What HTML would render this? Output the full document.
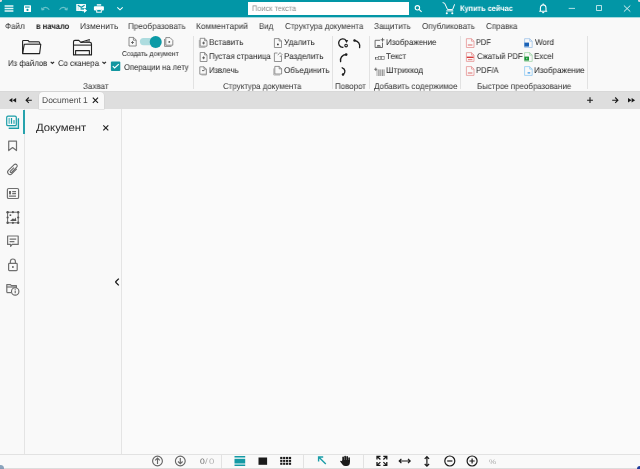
<!DOCTYPE html>
<html><head><meta charset="utf-8">
<style>
*{margin:0;padding:0;box-sizing:border-box}
html,body{width:640px;height:469px;overflow:hidden;background:#fafafa}
body{position:relative;font-family:"Liberation Sans",sans-serif;color:#444}
.a{position:absolute}
.t{position:absolute;white-space:nowrap;line-height:normal;transform-origin:0 0;will-change:transform;text-rendering:geometricPrecision}
svg{position:absolute;overflow:visible}
#title{left:0;top:0;width:640px;height:17px;background:#0296a6;box-shadow:0 1px 0 #a6d9de}
#menu{left:0;top:18px;width:640px;height:73px;background:#f9f9f9}
#tabbar{left:0;top:91px;width:640px;height:18px;background:#dedede;border-top:1px solid #d8d8d8}
#side{left:0;top:109px;width:25px;height:345px;background:#f9f9f9;border-right:1px solid #e4e4e4}
#panel{left:25px;top:109px;width:97px;height:345px;background:#f9f9f9;border-right:1px solid #e4e4e4}
#bottom{left:0;top:454px;width:640px;height:15px;background:#f9f9f9;border-top:1px solid #e2e2e2;border-bottom:1px solid #dcdcdc}
.sep{position:absolute;width:1px;background:#e2e2e2}

</style></head><body>
<div id="title" class="a"></div>
<div id="menu" class="a"></div>
<div id="tabbar" class="a"></div>
<div id="side" class="a"></div>
<div id="panel" class="a"></div>
<div id="bottom" class="a"></div>
<div class="a" style="left:248px;top:2px;width:161px;height:13px;background:#fff"></div>
<div class="sep" style="left:193px;top:36px;height:53px"></div>
<div class="sep" style="left:332px;top:36px;height:53px"></div>
<div class="sep" style="left:369px;top:36px;height:53px"></div>
<div class="sep" style="left:460px;top:36px;height:53px"></div>
<div class="sep" style="left:587px;top:36px;height:53px"></div>
<div class="a" style="left:38.5px;top:91.6px;width:65.7px;height:17.4px;background:#f9f9f9;border-radius:4px 4px 0 0;box-shadow:0 0 0 0.5px #d0d0d0"></div>
<div class="a" style="left:23px;top:110px;width:2px;height:24px;background:#27a3ad"></div>
<div class="sep" style="left:220.5px;top:455px;height:13px"></div>
<div class="sep" style="left:303px;top:455px;height:13px"></div>
<div class="sep" style="left:362.5px;top:455px;height:13px"></div>
<div class="a" style="left:-3px;top:465px;width:7px;height:7px;border-radius:50%;background:#6f8fae;opacity:.8"></div>
<div class="a" style="left:637px;top:466px;width:6px;height:6px;border-radius:50%;background:#1f3b9a"></div>
<div class="a" style="left:-1.5px;top:-1.5px;width:3.5px;height:3.5px;border-radius:50%;background:#e4dde0"></div>
<div class="a" style="left:638px;top:-1.5px;width:3.5px;height:3.5px;border-radius:50%;background:#ddd6e2"></div>
<svg class="a" style="left:0;top:0" width="640" height="469" viewBox="0 0 640 469">
<g fill="none" stroke="#e6f6f7" stroke-width="1.3">
 <path d="M4.6 6H13.4M4.6 8.5H13.4M4.6 11H13.4"/>
</g>
<g>
 <rect x="24" y="5.2" width="7" height="6.8" rx="0.6" fill="#fff"/>
 <rect x="25" y="6.5" width="4.6" height="1.1" fill="#0296a6"/>
 <circle cx="27.5" cy="9.9" r="1.1" fill="#0296a6"/>
</g>
<g fill="none" stroke="#6cc4cb" stroke-width="1.1">
 <path d="M42 9.8 C43.5 6.5 47 6.5 49.3 9.8"/>
 <path d="M41.6 7.6 L42.1 9.9 L44.3 9.4"/>
 <path d="M59.5 9.8 C61.5 6.5 65 6.5 67 9.8"/>
 <path d="M67.3 7.6 L66.9 9.9 L64.7 9.4"/>
</g>
<rect x="76.2" y="3.9" width="9.8" height="7" rx="0.5" fill="#f4fbfb"/>
<path d="M77.8 5.2 L81.3 7.3 L84.6 5.2" fill="none" stroke="#0296a6" stroke-width="1.1"/>
<path d="M78.3 6.4 V10" fill="none" stroke="#9fd6da" stroke-width="0.6"/>
<path d="M80.6 8.9 H86.5" fill="none" stroke="#0296a6" stroke-width="1.4"/>
<path d="M82.2 10.6 H85.2 M84.6 9.4 L86.1 10.6 L84.6 11.8 Z" fill="#fff" stroke="#fff" stroke-width="1.2"/>
<g fill="#fff">
 <rect x="96.8" y="4.2" width="4.4" height="1.4"/>
 <rect x="93.9" y="6.2" width="10" height="4.2" rx="0.9"/>
 <rect x="96.2" y="9" width="5.6" height="3.6" fill="#0296a6"/>
</g>
<rect x="96.7" y="9.4" width="4.6" height="2.8" fill="none" stroke="#fff" stroke-width="1"/>
<path d="M117.3 7.3 L120 9.8 L122.7 7.3" fill="none" stroke="#fff" stroke-width="1.1"/>
<g fill="none" stroke="#fff" stroke-width="1.1">
 <circle cx="417.4" cy="7.8" r="2.2"/>
 <path d="M419 9.4 L421.6 11.9"/>
</g>
<g fill="none" stroke="#fff" stroke-width="1.0">
 <path d="M442.6 2.6 L444.6 3.2 L447.6 9.6 L452.6 9.6 L454.6 4.3"/>
 <path d="M446.3 10.9 H453.3"/>
</g>
<circle cx="446.8" cy="13.2" r="1.05" fill="#fff"/>
<circle cx="452.3" cy="13.2" r="1.05" fill="#fff"/>
<g fill="none" stroke="#fff" stroke-width="1.1">
 <path d="M539.2 11.3 H547.2 M540.4 11.3 V8.2 C540.4 5.8 541.8 4.9 543.2 4.9 C544.6 4.9 546 5.8 546 8.2 V11.3"/>
 <path d="M542.2 12.6 H544.2"/>
 <path d="M543.2 3.6 V4.8"/>
</g>
<g fill="none" stroke="#d8f1f3" stroke-width="0.85">
 <path d="M568.7 8.4 H575"/>
 <rect x="596.6" y="5.6" width="4.9" height="4.9"/>
 <path d="M623.9 5.5 L630.3 11.6 M630.3 5.5 L623.9 11.6" stroke-width="1"/>
</g>

<g fill="none" stroke="#222" stroke-width="1.1" stroke-linejoin="round">
 <path d="M24.3 44.2 H40.8 L39.6 53.6 H22.6 Z" fill="#fafafa"/>
 <path d="M22.6 53.6 V41.2 Q22.6 40.5 23.3 40.5 H28 L29.2 41.7 H38.4 Q39.4 41.7 39.6 42.7 L39.9 44"/>
</g>
<path d="M29.4 42.4 H38.6 L39.2 43.6 H25 Z" fill="#8a8a8a"/>
<g fill="none" stroke="#222" stroke-width="1.1" stroke-linejoin="round">
 <path d="M73.5 54.9 V41.8 Q73.5 40.4 74.9 40.4 H78.8 L80.8 42.4 H89.8 Q91.5 42.4 91.5 44.1 V54.9 Z"/>
 <path d="M73.5 45.1 H91.5"/>
 <path d="M75.6 54.9 V50.6 H89.4 V54.9"/>
 <path d="M80.9 42.3 L89.8 39.4"/>
</g>
<path d="M81.6 42.5 L89.8 40 L90.2 42.2 Z" fill="#777"/>
<g fill="none" stroke="#6a6a6a" stroke-width="0.75" stroke-linejoin="round">
 <path d="M129 37.4 H133.6 L136.2 40 V46 H129 Z"/>
 <path d="M133.4 37.6 V40.2 H136"/>
 <path d="M132.5 41 V44 M131 42.5 H134" stroke="#555" stroke-width="0.8"/>
</g>
<rect x="139.9" y="38" width="17" height="7.2" rx="3.6" fill="#addcdf"/>
<circle cx="155.7" cy="42.1" r="6.2" fill="#c9c9c9" opacity="0.35"/>
<circle cx="155.7" cy="41.9" r="6" fill="#0b9aa6"/>
<g fill="none" stroke="#6a6a6a" stroke-width="0.75" stroke-linejoin="round">
 <path d="M165.8 37.6 H170 L172.8 40.4 V45.2 H165.8 Z"/>
 <path d="M164.6 39 V46.4 H171.5"/>
</g>
<circle cx="169.3" cy="41.9" r="0.9" fill="#555"/>
<path d="M50.7 61.8 L52.4 63.5 L54.1 61.8" fill="none" stroke="#2a2a2a" stroke-width="1.1"/>
<path d="M102.4 61.8 L104.2 63.5 L106 61.8" fill="none" stroke="#2a2a2a" stroke-width="1.1"/>
<rect x="110.9" y="61.4" width="9.4" height="9.6" rx="1" fill="#1396a0"/>
<path d="M112.8 66.1 L114.6 67.9 L118.8 64.1" fill="none" stroke="#fff" stroke-width="1.2"/>
<path d="M199.3 40 V47.4 H205.5" fill="none" stroke="#9a9a9a" stroke-width="0.75"/><path d="M200.2 38.3 H204.6 L207.0 40.699999999999996 V46.199999999999996 H200.2 Z M204.6 38.3 V40.699999999999996 H207.0" fill="none" stroke="#707070" stroke-width="0.75" stroke-linejoin="round"/><path d="M203.6 41.6 V44.4 M202.2 43 H205" stroke="#444" stroke-width="0.8"/><path d="M200.2 52.5 H204.6 L207.0 54.9 V61.5 H200.2 Z M204.6 52.5 V54.9 H207.0" fill="none" stroke="#707070" stroke-width="0.75" stroke-linejoin="round"/><path d="M203.6 56.4 V59.2 M202.2 57.8 H205" stroke="#444" stroke-width="0.8"/><path d="M199.8 66.8 H204.0 L206.4 69.2 V74.2 H199.8 Z M204.0 66.8 V69.2 H206.4" fill="none" stroke="#707070" stroke-width="0.75" stroke-linejoin="round"/><path d="M206.4 69 V75 H201.4" fill="none" stroke="#9a9a9a" stroke-width="0.75"/><path d="M202 70.6 H204.4" stroke="#444" stroke-width="0.8"/><path d="M274.4 38.6 H279.1 L281.5 41.0 V47.5 H274.4 Z M279.1 38.6 V41.0 H281.5" fill="none" stroke="#707070" stroke-width="0.75" stroke-linejoin="round"/><circle cx="277.9" cy="44.4" r="0.9" fill="#333"/><path d="M274.4 55 V61.5 H281.5 V56" fill="none" stroke="#707070" stroke-width="0.75"/><path d="M274.4 55 V53 H277.5" fill="none" stroke="#707070" stroke-width="0.75"/><path d="M277.8 55.2 L280 52.6 L282 54.6 L279.8 57" fill="none" stroke="#707070" stroke-width="0.75"/><path d="M274.8 66.4 H279.20000000000005 L281.6 68.80000000000001 V74.0 H274.8 Z M279.20000000000005 66.4 V68.80000000000001 H281.6" fill="none" stroke="#707070" stroke-width="0.75" stroke-linejoin="round"/><path d="M273.8 68.4 V75 H280" fill="none" stroke="#9a9a9a" stroke-width="0.75"/>
<g fill="none" stroke="#1e1e1e" stroke-width="1.35" stroke-linecap="round">
 <path d="M346.2 40.6 A4.2 4.2 0 1 0 342.9 47.3"/>
 <path d="M354.8 40.5 A5.8 5.8 0 0 1 359.6 47.6"/>
 <path d="M340.6 61.6 A5.8 5.8 0 0 1 346 54.5"/>
 <path d="M342.2 67.8 A3.7 3.7 0 0 1 343 74.6"/>
</g>
<g fill="#1e1e1e">
 <path d="M344.8 40.2 L348.2 40 L346.7 43 Z"/>
 <circle cx="354.5" cy="40.4" r="1.25"/>
 <circle cx="346.2" cy="54.6" r="1.3"/>
 <circle cx="343" cy="74.6" r="1.25"/>
</g>
<circle cx="346.1" cy="45.6" r="1.3" fill="#f9f9f9" stroke="#1e1e1e" stroke-width="1.1"/>

<g fill="none" stroke="#555" stroke-width="0.85">
 <path d="M380 40.3 H375.1 V47.5 H382.5 V42.6"/>
 <path d="M382.5 37.9 V41.7 M380.6 39.8 H384.4"/>
</g>
<path d="M376.6 46.4 L378 44.8 L379 45.8 L379.8 45 L381 46.4 Z" fill="#333"/>
<g fill="#666">
 <rect x="375" y="57" width="1" height="2.6"/><rect x="376.3" y="57" width="1.6" height="0.8"/><rect x="376.3" y="58.8" width="1.6" height="0.8"/>
 <rect x="378.4" y="56.4" width="2.4" height="3.2" fill="none" stroke="#777" stroke-width="0.7"/>
 <rect x="381.4" y="56.6" width="2.8" height="3" fill="none" stroke="#777" stroke-width="0.7"/>
</g>
<g fill="#999">
 <rect x="376.6" y="70" width="0.8" height="6"/><rect x="378.2" y="69.4" width="1.4" height="6.6"/>
 <rect x="380.2" y="69.4" width="0.8" height="6.6"/><rect x="381.6" y="69.4" width="1.6" height="6.6"/>
 <rect x="383.6" y="69.4" width="1" height="6.6"/>
</g>
<path d="M375.8 67.6 V71 M374.2 69.3 H377.4" stroke="#555" stroke-width="0.8"/>
<path d="M466.4 38.7 H471.5 L474.0 41.2 V47.5 H466.4 Z M471.5 38.7 V41.2 H474.0" fill="none" stroke="#e58e8e" stroke-width="0.75" stroke-linejoin="round"/><rect x="467.8" y="44.2" width="4.6" height="1.6" fill="#e8a0a0"/><path d="M466.4 52.6 H471.5 L474.0 55.1 V61.400000000000006 H466.4 Z M471.5 52.6 V55.1 H474.0" fill="none" stroke="#e58e8e" stroke-width="0.75" stroke-linejoin="round"/><rect x="466.8" y="56.6" width="6.8" height="1.4" fill="#d93a3a"/><path d="M468 59.6 H472.4" stroke="#e59090" stroke-width="1.2"/><path d="M466.4 66.6 H471.5 L474.0 69.1 V75.39999999999999 H466.4 Z M471.5 66.6 V69.1 H474.0" fill="none" stroke="#e58e8e" stroke-width="0.75" stroke-linejoin="round"/><rect x="467.8" y="72.2" width="4.6" height="1.6" fill="#e8a0a0"/><path d="M524.6 38.7 H529.7 L532.2 41.2 V47.5 H524.6 Z M529.7 38.7 V41.2 H532.2" fill="none" stroke="#9ec3e8" stroke-width="0.8" stroke-linejoin="round"/><rect x="524.4" y="42.6" width="4.6" height="4" fill="#1c63b7"/><path d="M524.6 52.6 H529.7 L532.2 55.1 V61.400000000000006 H524.6 Z M529.7 52.6 V55.1 H532.2" fill="none" stroke="#9fd4a8" stroke-width="0.8" stroke-linejoin="round"/><rect x="524.4" y="56.6" width="4.6" height="4" fill="#1a9338"/><rect x="526" y="57.8" width="1.4" height="1.4" fill="#8fd19e"/><path d="M524.6 66.6 H529.7 L532.2 69.1 V75.39999999999999 H524.6 Z M529.7 66.6 V69.1 H532.2" fill="none" stroke="#8ec9f2" stroke-width="0.8" stroke-linejoin="round"/><path d="M527.6 72.9 H530.2" stroke="#1e88e5" stroke-width="1.1"/>
<g fill="#1a1a1a">
 <path d="M9 100.2 L12.4 97.9 V102.5 Z"/>
 <path d="M12.6 100.2 L16.1 97.9 V102.5 Z"/>
</g>
<g fill="none" stroke="#1a1a1a" stroke-width="1.1">
 <path d="M26.2 100.2 H31.8 M28.8 97.5 L26.1 100.2 L28.8 102.9"/>
 <path d="M92.8 97.6 L98 102.8 M98 97.6 L92.8 102.8"/>
 <path d="M590 97.3 V103.1 M587.1 100.2 H592.9"/>
 <path d="M612.2 100.2 H617.8 M615.2 97.5 L617.9 100.2 L615.2 102.9"/>
</g>
<g fill="#1a1a1a">
 <path d="M628 97.9 L631.5 100.2 L628 102.5 Z"/>
 <path d="M631.6 97.9 L635.1 100.2 L631.6 102.5 Z"/>
</g>

<path d="M8.8 126.4 H16.9 V118.6 H18.6 V128.4 H8.8 Z" fill="#bfe3e6"/>
<g fill="none" stroke="#1a9da8" stroke-width="1.2">
 <rect x="6.7" y="116.1" width="9.6" height="9.6" rx="1.3"/>
 <path d="M18.5 118.3 V128.3 H8.7"/>
</g>
<rect x="8.4" y="118" width="1.6" height="5.8" fill="#7cc7cd"/>
<rect x="10.9" y="118" width="1.2" height="5.8" fill="#1a9da8"/>
<rect x="13" y="120.1" width="2" height="3.7" fill="#7cc7cd"/>
<g fill="none" stroke="#707070" stroke-width="1.2" stroke-linejoin="round">
 <path d="M8.7 141.2 H16.5 V150.6 L12.6 147.6 L8.7 150.6 Z"/>
 <rect x="7.4" y="188.5" width="11.2" height="10" rx="1.3"/>
 <path d="M12.2 191.6 H16 M12.2 193.6 H16 M8.9 196.2 H16"/>
 <path d="M7.6 236 H18.2 V244.4 H12.2 L10.6 246.4 V244.4 H7.6 Z"/>
 <path d="M9.6 239.2 H16.2 M9.6 241.6 H14.4"/>
 <rect x="8.6" y="263.4" width="8.6" height="7.2" rx="0.8"/>
 <path d="M10.4 263.4 V261.6 Q10.4 259 12.9 259 Q15.4 259 15.4 261.6 V263.4"/>
 <path d="M6.8 292.6 V284.6 H10.4 L11.4 285.6 H16.4 V288"/>
 <path d="M6.8 287 H16.2"/>
 <path d="M6.8 292.6 H11"/>
</g>
<rect x="9" y="191" width="2" height="3.4" fill="#666"/>
<path transform="translate(12.6 169.6) rotate(45) translate(0 -6.8)" d="M2.4 3.4 V10.4 A2.4 2.4 0 0 1 -2.4 10.4 V2.2 A1.8 1.8 0 0 1 1.2 2.2 V9.4 A0.85 0.85 0 0 1 -0.5 9.4 V4.4" fill="none" stroke="#666" stroke-width="1.05"/>
<circle cx="12.9" cy="267" r="0.9" fill="#555"/>
<rect x="7.6" y="212.2" width="10.6" height="10.6" fill="none" stroke="#666" stroke-width="1"/>
<g fill="#555">
 <circle cx="7.6" cy="212.2" r="1.2"/><circle cx="12.9" cy="212.2" r="1.1"/><circle cx="18.2" cy="212.2" r="1.2"/>
 <circle cx="7.6" cy="217.5" r="1.1"/><circle cx="18.2" cy="217.5" r="1.1"/>
 <circle cx="7.6" cy="222.8" r="1.2"/><circle cx="12.9" cy="222.8" r="1.1"/><circle cx="18.2" cy="222.8" r="1.2"/>
 <rect x="9.6" y="214.4" width="1.6" height="1.6"/>
 <path d="M10 221 L13 218.2 L14.2 219.4 L15.6 217.6 L16.4 221 Z"/>
</g>
<circle cx="15.2" cy="291.4" r="3.7" fill="#f9f9f9" stroke="#666" stroke-width="1.1"/>
<path d="M15.2 290.6 V293.2" stroke="#555" stroke-width="1"/>
<circle cx="15.2" cy="289.2" r="0.55" fill="#555"/>
<path d="M115.4 282 L118.8 278.6 M115.4 282 L118.8 285.4" stroke="#1a1a1a" stroke-width="1.3" fill="none"/>
<path d="M103.3 125.4 L108.3 130.4 M108.3 125.4 L103.3 130.4" stroke="#222" stroke-width="1.15" fill="none"/>

<g fill="none" stroke="#666" stroke-width="1.15">
 <circle cx="157.5" cy="461" r="4.9"/>
 <circle cx="180.3" cy="461" r="4.9"/>
 <path d="M157.5 464 V458.2 M155.2 460.4 L157.5 458.1 L159.8 460.4"/>
 <path d="M180.3 458 V463.6 M178 461.5 L180.3 463.8 L182.6 461.5"/>
</g>
<g fill="#139aa5">
 <rect x="234.5" y="456" width="10.7" height="1.5"/>
 <rect x="234.5" y="458.8" width="10.7" height="4.7"/>
 <rect x="234.5" y="464.5" width="10.7" height="1.5"/>
</g>
<rect x="258.5" y="457.5" width="8.6" height="7.3" fill="#1a1a1a"/>
<g fill="#1a1a1a">
 <rect x="280.2" y="456.9" width="2.2" height="2.1"/><rect x="283.1" y="456.9" width="2.2" height="2.1"/><rect x="286" y="456.9" width="2.2" height="2.1"/><rect x="288.9" y="456.9" width="2.2" height="2.1"/>
 <rect x="280.2" y="459.8" width="2.2" height="2.1"/><rect x="283.1" y="459.8" width="2.2" height="2.1"/><rect x="286" y="459.8" width="2.2" height="2.1"/><rect x="288.9" y="459.8" width="2.2" height="2.1"/>
 <rect x="280.2" y="462.7" width="2.2" height="2.1"/><rect x="283.1" y="462.7" width="2.2" height="2.1"/><rect x="286" y="462.7" width="2.2" height="2.1"/><rect x="288.9" y="462.7" width="2.2" height="2.1"/>
</g>
<path d="M325.8 464 L319.2 457.6 M318.6 461.6 V457 H323.2" fill="none" stroke="#1a9da8" stroke-width="1.4"/>
<g fill="#1a1a1a">
 <rect x="342.3" y="456.6" width="1.7" height="6" rx="0.85"/>
 <rect x="344.3" y="455.7" width="1.7" height="6" rx="0.85"/>
 <rect x="346.3" y="456.1" width="1.7" height="6" rx="0.85"/>
 <rect x="348.3" y="457.3" width="1.6" height="5" rx="0.8"/>
 <path d="M342.3 460 H349.9 V462.6 Q349.9 466 346.6 466 H345.4 Q343.6 466 342.4 464.4 L340.2 461.6 Q339.9 460.9 340.6 460.7 Q341.2 460.5 341.7 461 L342.3 461.6 Z"/>
</g>
<g fill="none" stroke="#1a1a1a" stroke-width="1.2">
 <path d="M377.00 459.60 V456.30 H380.50 M377.20 456.50 L380.40 459.50" stroke-width="1.3"/>
 <path d="M386.80 459.60 V456.30 H383.30 M386.60 456.50 L383.40 459.50" stroke-width="1.3"/>
 <path d="M377.00 462.00 V465.30 H380.50 M377.20 465.10 L380.40 462.10" stroke-width="1.3"/>
 <path d="M386.80 462.00 V465.30 H383.30 M386.60 465.10 L383.40 462.10" stroke-width="1.3"/>
 <path d="M399.2 461 H410.2 M401.4 458.8 L399.2 461 L401.4 463.2 M408 458.8 L410.2 461 L408 463.2"/>
 <path d="M426.9 456.6 V466.2 M424.7 458.8 L426.9 456.6 L429.1 458.8 M424.7 464 L426.9 466.2 L429.1 464"/>
 <circle cx="449.8" cy="461" r="5"/>
 <path d="M447.2 461 H452.4"/>
 <circle cx="472.1" cy="461" r="5"/>
 <path d="M469.5 461 H474.7 M472.1 458.4 V463.6"/>
</g>
</svg>
<div class="t" style="left:251.81px;top:4.06px;font-size:8px;font-weight:normal;color:#8c8c8c;transform:scaleX(0.9195)">Поиск текста</div>
<div class="t" style="left:460.36px;top:4.36px;font-size:8px;font-weight:bold;color:#ffffff;transform:scaleX(0.9188)">Купить сейчас</div>
<div class="t" style="left:5.35px;top:21.11px;font-size:8.5px;font-weight:normal;color:#333;transform:scaleX(0.9357)">Файл</div>
<div class="t" style="left:36.25px;top:21.11px;font-size:8.5px;font-weight:bold;color:#222;transform:scaleX(0.8865)">в начало</div>
<div class="t" style="left:79.63px;top:21.11px;font-size:8.5px;font-weight:normal;color:#333;transform:scaleX(0.9916)">Изменить</div>
<div class="t" style="left:128.10px;top:21.11px;font-size:8.5px;font-weight:normal;color:#333;transform:scaleX(0.9553)">Преобразовать</div>
<div class="t" style="left:195.94px;top:21.11px;font-size:8.5px;font-weight:normal;color:#333;transform:scaleX(0.9699)">Комментарий</div>
<div class="t" style="left:258.88px;top:21.11px;font-size:8.5px;font-weight:normal;color:#333;transform:scaleX(0.9189)">Вид</div>
<div class="t" style="left:284.60px;top:21.11px;font-size:8.5px;font-weight:normal;color:#333;transform:scaleX(0.9303)">Структура документа</div>
<div class="t" style="left:374.36px;top:21.11px;font-size:8.5px;font-weight:normal;color:#333;transform:scaleX(0.9510)">Защитить</div>
<div class="t" style="left:422.18px;top:21.11px;font-size:8.5px;font-weight:normal;color:#333;transform:scaleX(0.9501)">Опубликовать</div>
<div class="t" style="left:485.85px;top:21.11px;font-size:8.5px;font-weight:normal;color:#333;transform:scaleX(0.9453)">Справка</div>
<div class="t" style="left:8.28px;top:58.00px;font-size:8.4px;font-weight:normal;color:#222;transform:scaleX(0.9229)">Из файлов</div>
<div class="t" style="left:57.91px;top:58.00px;font-size:8.4px;font-weight:normal;color:#222;transform:scaleX(0.9235)">Со сканера</div>
<div class="t" style="left:121.56px;top:50.96px;font-size:7px;font-weight:normal;color:#1e1e1e;transform:scaleX(0.9614)">Создать документ</div>
<div class="t" style="left:123.89px;top:62.00px;font-size:8.4px;font-weight:normal;color:#222;transform:scaleX(0.9166)">Операции на лету</div>
<div class="t" style="left:83.36px;top:81.20px;font-size:8.4px;font-weight:normal;color:#333;transform:scaleX(0.9647)">Захват</div>
<div class="t" style="left:209.25px;top:37.40px;font-size:8.4px;font-weight:normal;color:#222;transform:scaleX(0.9656)">Вставить</div>
<div class="t" style="left:209.37px;top:51.40px;font-size:8.4px;font-weight:normal;color:#222;transform:scaleX(0.9400)">Пустая страница</div>
<div class="t" style="left:209.38px;top:65.40px;font-size:8.4px;font-weight:normal;color:#222;transform:scaleX(0.9202)">Извлечь</div>
<div class="t" style="left:284.04px;top:37.40px;font-size:8.4px;font-weight:normal;color:#222;transform:scaleX(0.9633)">Удалить</div>
<div class="t" style="left:283.55px;top:51.40px;font-size:8.4px;font-weight:normal;color:#222;transform:scaleX(0.9732)">Разделить</div>
<div class="t" style="left:283.88px;top:65.40px;font-size:8.4px;font-weight:normal;color:#222;transform:scaleX(0.9498)">Объединить</div>
<div class="t" style="left:223.10px;top:81.20px;font-size:8.4px;font-weight:normal;color:#333;transform:scaleX(0.9450)">Структура документа</div>
<div class="t" style="left:335.36px;top:81.20px;font-size:8.4px;font-weight:normal;color:#333;transform:scaleX(0.9495)">Поворот</div>
<div class="t" style="left:385.76px;top:37.40px;font-size:8.4px;font-weight:normal;color:#222;transform:scaleX(0.9569)">Изображение</div>
<div class="t" style="left:386.24px;top:51.40px;font-size:8.4px;font-weight:normal;color:#222;transform:scaleX(0.9564)">Текст</div>
<div class="t" style="left:385.75px;top:65.40px;font-size:8.4px;font-weight:normal;color:#222;transform:scaleX(0.9738)">Штрихкод</div>
<div class="t" style="left:373.75px;top:81.20px;font-size:8.4px;font-weight:normal;color:#333;transform:scaleX(0.9537)">Добавить содержимое</div>
<div class="t" style="left:476.41px;top:37.40px;font-size:8.4px;font-weight:normal;color:#222;transform:scaleX(0.8822)">PDF</div>
<div class="t" style="left:476.62px;top:51.40px;font-size:8.4px;font-weight:normal;color:#222;transform:scaleX(0.9152)">Сжатый PDF</div>
<div class="t" style="left:476.38px;top:65.40px;font-size:8.4px;font-weight:normal;color:#222;transform:scaleX(0.9216)">PDF/A</div>
<div class="t" style="left:534.90px;top:37.40px;font-size:8.4px;font-weight:normal;color:#222;transform:scaleX(0.9514)">Word</div>
<div class="t" style="left:534.26px;top:51.40px;font-size:8.4px;font-weight:normal;color:#222;transform:scaleX(0.9562)">Excel</div>
<div class="t" style="left:534.25px;top:65.40px;font-size:8.4px;font-weight:normal;color:#222;transform:scaleX(0.9627)">Изображение</div>
<div class="t" style="left:476.67px;top:81.20px;font-size:8.4px;font-weight:normal;color:#333;transform:scaleX(0.9448)">Быстрое преобразование</div>
<div class="t" style="left:41.63px;top:95.21px;font-size:8.5px;font-weight:normal;color:#4a4a4a;transform:scaleX(0.9920)">Document 1</div>
<div class="t" style="left:36.40px;top:122.10px;font-size:10.5px;font-weight:normal;color:#262626;transform:scaleX(1.0797)">Документ</div>
<div class="t" style="left:199.74px;top:457.36px;font-size:8px;font-weight:normal;color:#666;transform:scaleX(1.0714)">0</div>
<div class="t" style="left:205.40px;top:457.36px;font-size:8px;font-weight:normal;color:#aaa;transform:scaleX(1.2054)">/</div>
<div class="t" style="left:209.47px;top:457.36px;font-size:8px;font-weight:normal;color:#b0b0b0;transform:scaleX(1.1862)">0</div>
<div class="t" style="left:488.76px;top:458.62px;font-size:6.5px;font-weight:normal;color:#aaa;transform:scaleX(1.2419)">%</div>
</body></html>
